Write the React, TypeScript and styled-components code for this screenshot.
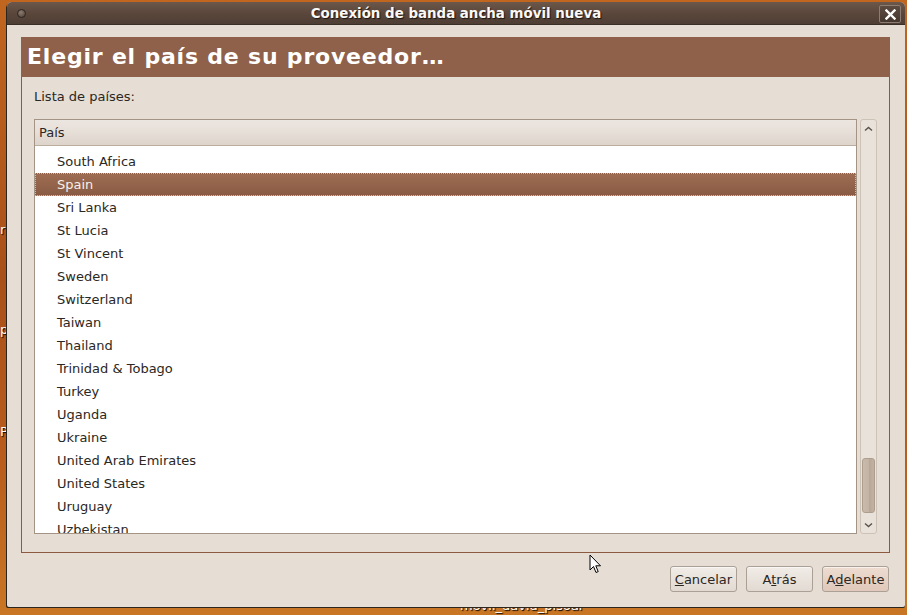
import * as React from 'react';
import styled, { createGlobalStyle } from 'styled-components';

const GlobalStyle = createGlobalStyle`
  html, body {
    margin: 0;
    padding: 0;
    overflow: hidden;
  }
  body {
    font-family: 'DejaVu Sans', 'Liberation Sans', sans-serif;
    font-size: 13px;
  }
`;

const countries = [
  'South Africa',
  'Spain',
  'Sri Lanka',
  'St Lucia',
  'St Vincent',
  'Sweden',
  'Switzerland',
  'Taiwan',
  'Thailand',
  'Trinidad & Tobago',
  'Turkey',
  'Uganda',
  'Ukraine',
  'United Arab Emirates',
  'United States',
  'Uruguay',
  'Uzbekistan'
];

const Desktop = styled.div`
  position: relative;
  width: 907px;
  height: 615px;
  overflow: hidden;
  background: linear-gradient(180deg, #c0661f 0%, #a9501a 45%, #b85d1d 75%, #c97624 100%);
`;

const DesktopLabel = styled.span<{ top: number; left: number }>`
  position: absolute;
  top: ${(p) => p.top}px;
  left: ${(p) => p.left}px;
  color: #fff;
  font-size: 13px;
  text-shadow: 1px 1px 1px #000;
  white-space: nowrap;
`;

const Window = styled.div`
  position: relative;
  z-index: 1;
  margin: 2px 0 0 7px;
  width: 898px;
  height: 605px;
  display: flex;
  flex-direction: column;
  border-radius: 5px 5px 2px 2px;
  background: #e6ded5;
  box-shadow: -1px 1px 0 #2b2520, 0 1px 0 #2b2520;
  overflow: hidden;
`;

const TitleBar = styled.div`
  position: relative;
  height: 23px;
  flex: none;
  display: flex;
  align-items: center;
  justify-content: center;
  background: linear-gradient(180deg, #6c574a 0%, #5b473c 50%, #4e3e34 100%);
  border-bottom: 1px solid #3a2e27;
  box-sizing: border-box;
`;

const TitleText = styled.span`
  color: #fbf8f5;
  font-weight: bold;
  font-size: 13.4px;
  text-shadow: 1px 1px 1px #1c1410;
`;

const MenuDot = styled.span`
  position: absolute;
  left: 10px;
  top: 7px;
  width: 7px;
  height: 7px;
  border-radius: 50%;
  border: 1px solid #2d2520;
  background: radial-gradient(circle at 40% 35%, #8d7c70, #4a3c33);
`;

const CloseButton = styled.span`
  position: absolute;
  right: 4px;
  top: 3px;
  width: 20px;
  height: 16px;
  border: 1px solid #8c7c72;
  border-radius: 2px;
  background: linear-gradient(180deg, #5d4b40, #45372f);
  display: flex;
  align-items: center;
  justify-content: center;
`;

const Body = styled.div`
  flex: 1;
  display: flex;
  flex-direction: column;
  padding: 12px 15px 15px 14px;
  min-height: 0;
`;

const Banner = styled.div`
  height: 40px;
  flex: none;
  background: #8f604a;
  color: #fff;
  font-weight: bold;
  font-size: 22px;
  display: flex;
  align-items: center;
  padding-left: 6px;
  padding-bottom: 1px;
  box-sizing: border-box;
  letter-spacing: 0.8px;
`;

const Frame = styled.div`
  flex: 1;
  display: flex;
  flex-direction: column;
  border: 1px solid #8c5a40;
  border-top: none;
  padding: 12px 12px 18px 12px;
  min-height: 0;
`;

const Label = styled.div`
  color: #2b2723;
  line-height: 16px;
  margin-bottom: 14px;
`;

const ListArea = styled.div`
  flex: 1;
  display: flex;
  gap: 3px;
  min-height: 0;
`;

const ListView = styled.div`
  flex: 1;
  display: flex;
  flex-direction: column;
  border: 1px solid #a39485;
  background: #fff;
  overflow: hidden;
`;

const ListHeader = styled.div`
  height: 26px;
  flex: none;
  display: flex;
  align-items: center;
  padding-left: 4px;
  color: #2b2723;
  background: linear-gradient(180deg, #ece6e0 0%, #e8e1da 40%, #ddd4cb 100%);
  border-bottom: 1px solid #bcae9f;
  box-sizing: border-box;
`;

const Rows = styled.div`
  margin-top: 4px;
`;

const Row = styled.div<{ selected?: boolean }>`
  height: 23px;
  display: flex;
  align-items: center;
  padding-left: 21px;
  box-sizing: border-box;
  color: ${(p) => (p.selected ? '#f6efe9' : '#2b2723')};
  background: ${(p) => (p.selected ? 'linear-gradient(180deg, #9d6c52 0%, #8a5b44 100%)' : 'transparent')};
  border: 1px dotted ${(p) => (p.selected ? '#d7b9a7' : 'transparent')};
`;

const Scrollbar = styled.div`
  width: 17px;
  flex: none;
  display: flex;
  flex-direction: column;
  border: 1px solid #cdc2b6;
  border-radius: 3px;
  background: #e9e2db;
  box-sizing: border-box;
`;

const ScrollArrow = styled.div`
  height: 17px;
  flex: none;
  display: flex;
  align-items: center;
  justify-content: center;
`;

const ScrollTrack = styled.div`
  flex: 1;
  display: flex;
  flex-direction: column;
  justify-content: flex-end;
  padding: 0 1px 3px 1px;
`;

const Thumb = styled.div`
  height: 55px;
  border: 1px solid #ad9d8d;
  border-radius: 3px;
  box-sizing: border-box;
  background: linear-gradient(90deg, #c9baac 0%, #c3b3a4 55%, #b8a797 56%, #c2b2a3 100%);
`;

const ButtonRow = styled.div`
  display: flex;
  justify-content: flex-end;
  gap: 9px;
  margin-top: 13px;
  margin-right: 1px;
`;

const Button = styled.button<{ primary?: boolean }>`
  width: 67px;
  height: 26px;
  padding: 0;
  font-family: 'DejaVu Sans', 'Liberation Sans', sans-serif;
  font-size: 13px;
  color: #2b2723;
  border: 1px solid #aaa095;
  border-radius: 3px;
  background: ${(p) =>
    p.primary ? 'linear-gradient(180deg, #eedcd1 0%, #e0c8ba 100%)' : 'linear-gradient(180deg, #f1ece7 0%, #e2dad2 100%)'};
  box-shadow: inset 0 1px 0 rgba(255, 255, 255, 0.6);

  u {
    text-decoration: underline;
  }
`;

const Cursor = styled.svg`
  position: absolute;
  left: 589px;
  top: 554px;
  z-index: 2;
`;

const Chevron = ({ down }: { down?: boolean }) => (
  <svg width="9" height="6" viewBox="0 0 9 6">
    <path d={down ? 'M1 1.5 L4.5 4.5 L8 1.5' : 'M1 4.5 L4.5 1.5 L8 4.5'} fill="none" stroke="#5a514a" strokeWidth="1.4" />
  </svg>
);

export default function App() {
  return (
    <Desktop>
      <GlobalStyle />
      <DesktopLabel top={222} left={0}>
        r
      </DesktopLabel>
      <DesktopLabel top={322} left={0}>
        p
      </DesktopLabel>
      <DesktopLabel top={424} left={0}>
        P
      </DesktopLabel>
      <DesktopLabel top={598} left={460}>
        movil_david_pisoar
      </DesktopLabel>

      <Window>
        <TitleBar>
          <MenuDot />
          <TitleText>Conexión de banda ancha móvil nueva</TitleText>
          <CloseButton>
            <svg width="11" height="11" viewBox="0 0 11 11">
              <path d="M1.5 1.5 L9.5 9.5 M9.5 1.5 L1.5 9.5" stroke="#fff" strokeWidth="2.4" strokeLinecap="square" />
            </svg>
          </CloseButton>
        </TitleBar>
        <Body>
          <Banner>Elegir el país de su proveedor…</Banner>
          <Frame>
            <Label>Lista de países:</Label>
            <ListArea>
              <ListView>
                <ListHeader>País</ListHeader>
                <Rows>
                  {countries.map((name) => (
                    <Row key={name} selected={name === 'Spain'}>
                      {name}
                    </Row>
                  ))}
                </Rows>
              </ListView>
              <Scrollbar>
                <ScrollArrow>
                  <Chevron />
                </ScrollArrow>
                <ScrollTrack>
                  <Thumb />
                </ScrollTrack>
                <ScrollArrow>
                  <Chevron down />
                </ScrollArrow>
              </Scrollbar>
            </ListArea>
          </Frame>
          <ButtonRow>
            <Button>
              <u>C</u>ancelar
            </Button>
            <Button>
              A<u>t</u>rás
            </Button>
            <Button primary>
              A<u>d</u>elante
            </Button>
          </ButtonRow>
        </Body>
      </Window>

      <Cursor width="13" height="21" viewBox="0 0 13 21">
        <path d="M1 1 L1 16 L4.5 12.5 L7 18.5 L9.2 17.6 L6.8 11.8 L11.5 11.8 Z" fill="#fff" stroke="#000" strokeWidth="1" strokeLinejoin="miter" />
      </Cursor>
    </Desktop>
  );
}
